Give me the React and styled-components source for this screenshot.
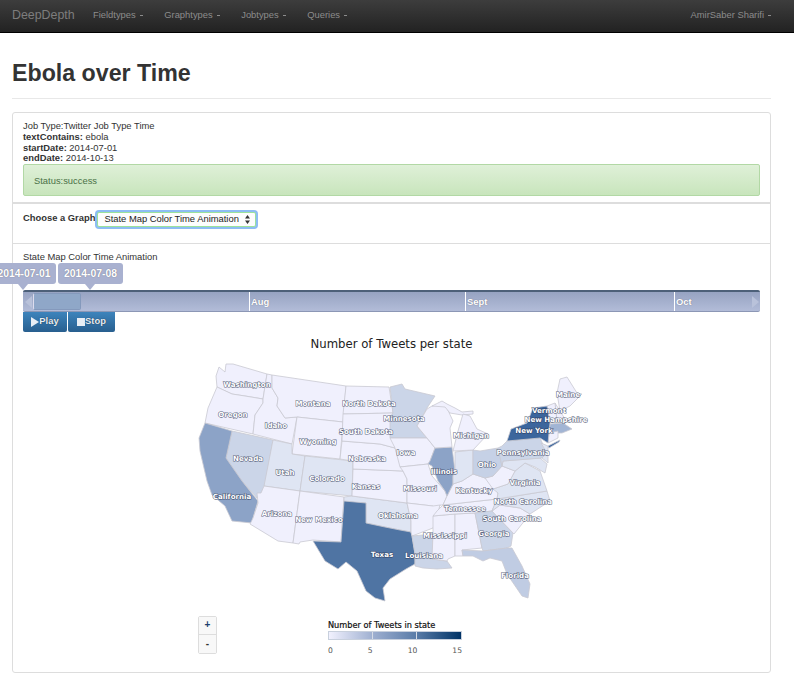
import React from "react";
import styled, { createGlobalStyle } from "styled-components";

const Global = createGlobalStyle`
  html, body { margin: 0; padding: 0; background: #fff; overflow: hidden; }
  body { font-family: "Liberation Sans", Arial, sans-serif; font-size: 9.4px; line-height: 10.8px; color: #333; width: 794px; height: 685px; }
`;

const Navbar = styled.header`
  height: 33px; box-sizing: border-box; border-bottom: 1px solid #000;
  background: linear-gradient(#3d3d3d, #222);
  display: flex; align-items: center; padding: 0 23px 2px 12px; color: #8c8c8c;
`;
const Brand = styled.span`font-size: 12.4px; width: 81px; color: #7d7d7d;`;
const NavItem = styled.span`
  font-size: 9.4px; margin-right: 21.5px; white-space: nowrap;
  &::after { content: ""; display: inline-block; width: 3px; height: 1px; background: #8c8c8c; margin-left: 4px; vertical-align: 2px; }
`;
const NavRight = styled(NavItem)`margin: 0 0 0 auto;`;

const Page = styled.main`padding: 0 23px 0 12px;`;
const Header = styled.div`padding: 27px 0 13px; border-bottom: 1px solid #e8e8e8; height: 25px; margin-bottom: 13px;`;
const Title = styled.h1`margin: 0; font-size: 23.2px; line-height: 26px; font-weight: 700; color: #333;`;

const Panel = styled.section`border: 1px solid #ddd; border-radius: 3px; height: 559px;`;
const Section = styled.div`
  padding: ${p => p.$pad || "8px 10px 0"}; height: ${p => p.$h}px; box-sizing: border-box;
  border-bottom: ${p => p.$bw || 0}px solid #ddd;
`;
const Line = styled.div`white-space: nowrap;`;
const Alert = styled.div`
  height: 32px; box-sizing: border-box; margin-top: 0; padding: 11px 10px 0; color: #4a7146; border: 1px solid #b2d8a5; border-radius: 2px;
  background: linear-gradient(#dff0d8, #c8e5bc);
`;
const ChooseRow = styled.div`display: flex; align-items: flex-start; gap: 2px; font-weight: 700; padding-top: 3px;`;
const SelectBox = styled.div`
  width: 159px; height: 15px; margin-top: -1px; display: flex; align-items: center; justify-content: space-between; padding: 0 5px 0 6px;
  box-sizing: border-box; background: #fdfdfd; font-weight: 400; color: #222; border: 1px solid #9be29b; border-radius: 2px;
  box-shadow: 0 0 0 2px #8dbdf3;
`;
const Timeline = styled.div`position: relative; margin-top: 27px; width: 737px; height: 22px;`;
const Bubble = styled.div`
  position: absolute; top: -27px; left: ${p => p.$x}px; width: ${p => p.$w}px; height: 21px; background: #a9b1d0; border-radius: 3px;
  color: #fff; font-size: 10.4px; line-height: 21px; font-weight: 700; text-align: center; text-shadow: 0 0 1px #667;
  &::after { content: ""; position: absolute; left: ${p => p.$tip}px; bottom: -6px; border: 5px solid transparent; border-bottom: 0; border-top: 6px solid #a9b1d0; margin-left: -5px; }
`;
const Track = styled.div`
  height: 22px; box-sizing: border-box; width: 737px; border-top: 2px solid #4d6079; border-bottom: 1px solid #8c97b5; border-radius: 2px;
  background: linear-gradient(#97a3c2, #b2bcd8); position: relative;
`;
const Handle = styled.div`position: absolute; left: 10px; top: 1px; width: 48px; height: 17px; background: #8fa7c8; border-radius: 2px; border: 1px solid #8499bc; box-sizing: border-box; border-left: 1px solid #dde;`;
const Arrow = styled.div`
  position: absolute; top: 4px; ${p => p.$right ? "right: 1px; border-left: 7px solid #b9c2da;" : "left: 2px; border-right: 7px solid #b9c2da;"}
  border-top: 6px solid transparent; border-bottom: 6px solid transparent;
`;
const Tick = styled.div`
  position: absolute; top: 0; bottom: 0; left: ${p => p.$x}px; border-left: 1px solid #fff; color: #fff; font-size: 9.4px; font-weight: 700; line-height: 19px; padding-left: 1px; text-shadow: 0 0 1px #667;
`;
const Buttons = styled.div`display: flex; gap: 1px;`;
const Btn = styled.div`
  height: 20px; width: ${p => p.$w}px; box-sizing: border-box; display: flex; align-items: center; justify-content: center;
  background: linear-gradient(#3d84bc, #285f8f); color: #e8eef5; font-weight: 700; font-size: 9.4px; border-radius: 0 0 2px 2px; text-shadow: 0 0 1px #123;
`;
const ChartTitle = styled.div`font-family: "DejaVu Sans", sans-serif; font-size: 11.7px; line-height: 14px; color: #222; text-align: center; margin-top: 5px; width: 737px;`;
const MapSvg = styled.svg`display: block; margin: 5px 0 0 167px;`;
const Label = styled.text`
  font-family: "DejaVu Sans", sans-serif; font-size: 7.1px; font-weight: 700; fill: #fff; stroke: rgba(45,55,85,.75); stroke-width: 1.1px; paint-order: stroke; text-anchor: middle;
`;
const Foot = styled.div`display: flex; align-items: flex-start; margin: 5px 0 0 175px;`;
const Zoom = styled.div`width: 19px; height: 38px; border: 1px solid #ddd; border-radius: 2px; display: flex; flex-direction: column; box-sizing: border-box;`;
const ZoomBtn = styled.div`flex: 1; display: flex; align-items: center; justify-content: center; font-weight: 700; font-size: 10px; background: #f8f8f8; color: #1d3f6e; & + & { border-top: 1px solid #ddd; color: #333; }`;
const Legend = styled.div`margin: 4px 0 0 111px; width: 136px;`;
const LegendTitle = styled.div`font-family: "DejaVu Sans", sans-serif; font-size: 8.2px; line-height: 11px; color: #111; white-space: nowrap; -webkit-text-stroke: 0.2px #111;`;
const LegendBar = styled.div`
  height: 9px; width: 134px; border: 1px solid #c8d0dd; box-sizing: border-box;
  background:
    linear-gradient(#d5dbe6, #d5dbe6) 43px 0 / 1px 100% no-repeat,
    linear-gradient(#d5dbe6, #d5dbe6) 87px 0 / 1px 100% no-repeat,
    linear-gradient(to right, #f1f1fe, #9aacce 35%, #5a7ca8 66%, #003366);
`;
const LegendScale = styled.div`display: flex; justify-content: space-between; font-family: "DejaVu Sans", sans-serif; font-size: 7.6px; line-height: 10px; margin-top: 6px; color: #555; width: 134px;`;

const L = "#f0f0fd", A = "#dfe5f3", B = "#cbd5e8", C = "#8ca3c7", D = "#4f74a3", E = "#3c669d";
const states = [
  ["WA", L, "219,366 225,371 226,363 233,363 267,373 263,398 245,395 232,393 217,386 216,375"],
  ["OR", L, "217,386 232,393 245,395 263,398 263,402 255,414 253,433 205,422 208,407"],
  ["ID", L, "267,373 272,374 272,387 278,397 277,405 285,417 297,416 292,443 253,433 255,414 263,402 263,398"],
  ["MT", L, "272,374 346,385 343,421 297,416 285,417 277,405 278,397 272,387"],
  ["WY", L, "297,416 343,421 340,458 292,453"],
  ["NV", B, "232,430 273,439 265,485 261,492 257,497 242,480 226,457"],
  ["CA", C, "205,422 232,430 226,457 242,480 258,500 253,517 252,522 232,520 225,505 212,494 207,480 200,450 199,437"],
  ["UT", A, "273,439 292,443 292,453 305,455 300,490 264,485"],
  ["CO", A, "305,455 353,460 352,495 300,490"],
  ["AZ", L, "264,485 300,490 293,542 278,540 250,523 253,517 258,502 257,492 261,492"],
  ["NM", L, "300,490 344,496 341,541 313,539 300,541 299,543 293,542"],
  ["OK", A, "344,496 352,495 407,502 411,520 411,531 400,529 385,526 366,522 366,502 344,501"],
  ["TX", D, "344,500 366,502 366,522 385,526 400,529 411,531 412,535 415,553 415,563 406,568 390,578 383,587 385,600 375,597 366,590 357,570 346,561 338,568 325,560 313,540 341,541"],
  ["KS", L, "353,468 403,470 407,478 407,502 352,495"],
  ["NE", L, "342,440 380,443 395,447 403,470 353,468 353,460 340,458"],
  ["ND", L, "346,385 389,386 393,412 343,413"],
  ["SD", L, "343,413 393,412 390,417 393,438 395,447 380,443 342,440"],
  ["MN", B, "390,386 402,383 405,388 435,395 427,407 417,425 427,437 390,437 390,417 393,412"],
  ["IA", L, "390,437 427,437 435,447 430,460 428,463 400,466 395,447"],
  ["MO", L, "400,466 428,463 432,475 445,490 447,495 443,504 440,504 438,510 433,509 433,505 407,502 407,478 403,470"],
  ["AR", L, "407,502 433,505 440,504 437,515 433,527 412,535 411,531 411,520"],
  ["LA", B, "412,535 433,533 432,558 447,560 452,567 437,568 423,567 415,565 415,553"],
  ["MS", L, "433,515 455,513 455,555 448,558 447,560 432,558 433,533 433,527"],
  ["AL", L, "455,513 475,512 482,547 462,549 463,555 455,555"],
  ["TN", L, "443,504 497,498 492,510 475,512 455,513 433,515 437,510"],
  ["KY", L, "447,495 453,483 462,480 473,473 485,477 493,485 498,492 497,498 443,504"],
  ["GA", B, "475,512 492,510 513,532 511,545 507,547 483,550 482,547"],
  ["FL", "#c0cce3", "462,549 483,550 507,547 512,547 522,565 530,583 528,597 522,595 507,573 502,560 490,557 483,560 473,555 463,555"],
  ["SC", L, "492,510 500,504 520,507 530,513 514,533 513,532"],
  ["NC", A, "497,498 547,490 550,500 530,513 520,507 500,504 492,510"],
  ["VA", A, "493,488 508,483 515,470 525,462 540,470 547,490 497,498 498,492"],
  ["WV", L, "502,465 515,470 508,483 493,488 485,477 493,475"],
  ["IL", C, "435,447 452,446 455,470 453,475 453,483 447,495 445,490 438,480 432,465 428,463 430,460"],
  ["IN", A, "455,451 473,449 473,473 462,480 453,483 453,475 455,470"],
  ["OH", "#c6d1e6", "473,449 480,450 498,447 502,465 493,475 485,477 473,473"],
  ["MD", A, "503,460 540,457 547,463 545,472 535,466 525,462 515,470 502,465"],
  ["PA", B, "498,447 502,445 507,440 540,437 547,452 542,457 503,460 502,465"],
  ["NJ", A, "541,442 548,445 548,462 542,457 547,452"],
  ["WI", L, "427,408 432,405 445,403 453,420 450,427 452,446 435,447 427,437 417,425"],
  ["MIU", L, "432,405 442,400 447,403 455,407 462,411 473,410 473,413 462,414 450,412 445,406"],
  ["MIL", L, "453,450 458,430 463,413 470,415 477,428 488,433 473,449"],
  ["ME", L, "560,378 567,376 577,392 582,393 570,405 560,410 557,392"],
  ["NH", L, "555,402 560,410 565,418 558,420 557,420"],
  ["VT", L, "547,405 555,402 557,420 550,422"],
  ["MA", "#a2b5d4", "550,423 563,422 572,428 562,432 549,432"],
  ["CT", L, "549,432 558,430 558,437 548,442"],
  ["NY", E, "507,440 511,428 527,422 533,407 547,405 550,422 549,432 548,442 540,437"],
  ["LI", E, "548,445 560,439 559,441 549,447"],
];
const labels = [
  ["Washington",247,386],["Oregon",233,416],["Idaho",276,427],["Montana",313,405],["North Dakota",369,405],["South Dakota",366,433],
  ["Wyoming",318,443],["Nevada",248,460],["Utah",285,474],["Colorado",327,480],["Nebraska",367,460],["Kansas",366,488],
  ["Minnesota",404,420],["Iowa",406,454],["Illinois",444,473],["Michigan",471,437],["Ohio",487,466],["Pennsylvania",523,454],
  ["New York",534,432],["New Hampshire",556,421],["Vermont",549,412],["Maine",568,396],["Missouri",420,490],["Kentucky",474,492],
  ["Virginia",525,484],["Tennessee",465,510],["North Carolina",523,503],["South Carolina",512,520],["Georgia",494,535],
  ["Mississippi",445,537],["Louisiana",424,557],["Florida",515,577],["Texas",382,556],["Oklahoma",398,517],["Arizona",277,515],
  ["New Mexico",319,521],["California",232,498],
];

export default function App() {
  return (
    <>
      <Global />
      <Navbar>
        <Brand>DeepDepth</Brand>
        <NavItem>Fieldtypes</NavItem>
        <NavItem>Graphtypes</NavItem>
        <NavItem>Jobtypes</NavItem>
        <NavItem>Queries</NavItem>
        <NavRight>AmirSaber Sharifi</NavRight>
      </Navbar>
      <Page>
        <Header><Title>Ebola over Time</Title></Header>
        <Panel>
          <Section $h={91} $bw={2}>
            <Line>Job Type:Twitter Job Type Time</Line>
            <Line><b>textContains:</b> ebola</Line>
            <Line><b>startDate:</b> 2014-07-01</Line>
            <Line><b>endDate:</b> 2014-10-13</Line>
            <Alert>Status:success</Alert>
          </Section>
          <Section $h={40} $bw={1} $pad="6px 10px 0">
            <ChooseRow>
              Choose a Graph
              <SelectBox>
                State Map Color Time Animation
                <svg width="5" height="9" viewBox="0 0 5 9"><path d="M2.5 0 5 3.4H0zM2.5 9 5 5.6H0z" fill="#333" /></svg>
              </SelectBox>
            </ChooseRow>
          </Section>
          <Section $h={426} $pad="8px 10px 0">
            <Line>State Map Color Time Animation</Line>
            <Timeline>
              <Bubble $x={-31} $w={64} $tip={31}>2014-07-01</Bubble>
              <Bubble $x={35} $w={65} $tip={32}>2014-07-08</Bubble>
              <Track>
                <Arrow />
                <Handle />
                <Tick $x={226}>Aug</Tick>
                <Tick $x={442}>Sept</Tick>
                <Tick $x={651}>Oct</Tick>
                <Arrow $right />
              </Track>
            </Timeline>
            <Buttons>
              <Btn $w={44}>
                <svg width="8" height="10" viewBox="0 0 8 10"><path d="M0 0 8 5 0 10z" fill="#e8eef5" /></svg>Play
              </Btn>
              <Btn $w={47}>
                <svg width="8" height="8" viewBox="0 0 8 8"><rect width="8" height="8" fill="#e8eef5" /></svg>Stop
              </Btn>
            </Buttons>
            <ChartTitle>Number of Tweets per state</ChartTitle>
            <MapSvg width="400" height="255" viewBox="190 355 400 255">
              {states.map(([id, fill, pts]) => (
                <polygon key={id} points={pts} fill={fill} stroke="#c9c9d2" strokeWidth="0.8" strokeLinejoin="round" />
              ))}
              {labels.map(([t, x, y]) => <Label key={t} x={x} y={y}>{t}</Label>)}
            </MapSvg>
            <Foot>
              <Zoom><ZoomBtn>+</ZoomBtn><ZoomBtn>-</ZoomBtn></Zoom>
              <Legend>
                <LegendTitle>Number of Tweets in state</LegendTitle>
                <LegendBar />
                <LegendScale><span>0</span><span>5</span><span>10</span><span>15</span></LegendScale>
              </Legend>
            </Foot>
          </Section>
        </Panel>
      </Page>
    </>
  );
}
